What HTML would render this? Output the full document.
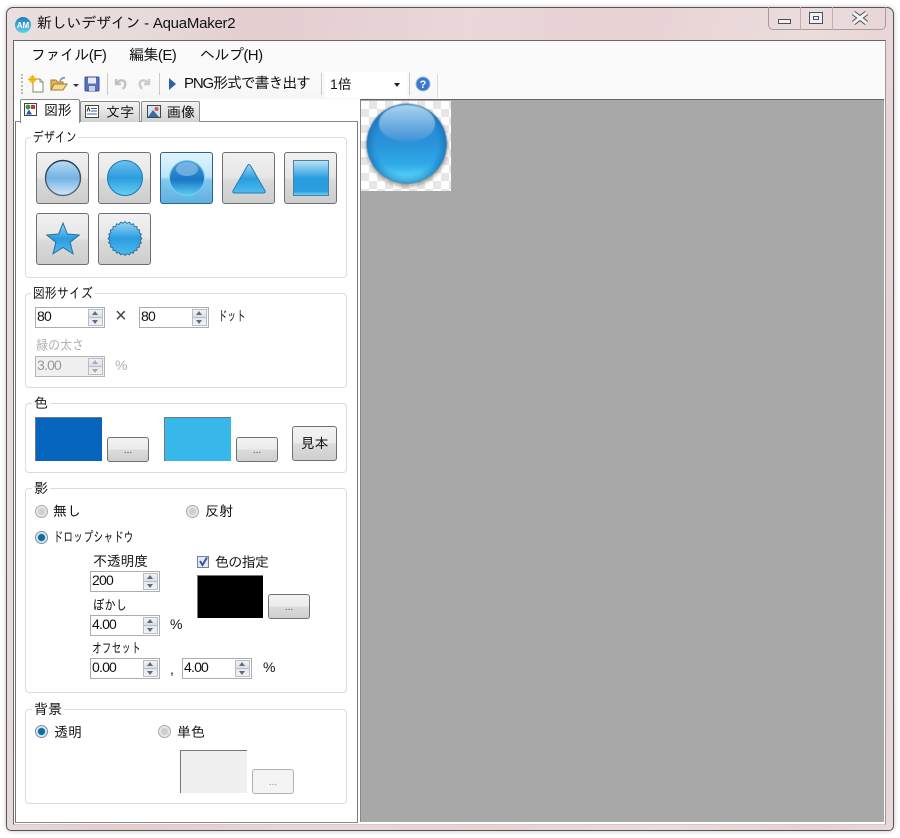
<!DOCTYPE html>
<html lang="ja">
<head>
<meta charset="utf-8">
<title>新しいデザイン - AquaMaker2</title>
<style>
html,body{margin:0;padding:0;background:#fff;}
body{width:900px;height:838px;position:relative;overflow:hidden;font-family:"Liberation Sans","IPAGothic","Noto Sans CJK JP",sans-serif;font-size:14px;color:#111;}
div,span,svg{position:absolute;box-sizing:border-box;}
.t{white-space:nowrap;line-height:16px;height:16px;}
.dis{color:#b0b0b0;}
.sx{transform-origin:0 50%;}
.win{left:6px;top:7px;width:888px;height:824px;border:1px solid #555;border-radius:7px 7px 5px 5px;box-shadow:0 0 5px rgba(0,0,0,.25);background:linear-gradient(100deg,#e9dfdf 0,#e7dcdc 12%,#e3ced0 24%,#e9d7d9 45%,#e7d2d4 60%,#ecdcdd 78%,#e6d1d3 92%,#e9d8d9 100%);}
.client{left:13px;top:40px;width:873px;height:785px;background:#fff;border:1px solid #666;border-right-color:#999;border-bottom-color:#d8c8ca;}
.menu{left:14px;top:41px;width:871px;height:58px;background:#fafafa;}
.tool{left:20px;top:70px;width:418px;height:29px;background:linear-gradient(#fbfbfb,#f6f6f6);}
.sep{width:1px;height:22px;top:73px;background:#c9c9c9;}
.canvas{left:360px;top:99px;width:524px;height:723px;background:#a8a8a8;border-top:1px solid #666;border-left:1px solid #888;}
.chk{left:361px;top:101px;width:90px;height:90px;background-color:#fff;background-image:conic-gradient(#e6e6e6 25%,#fff 0 50%,#e6e6e6 0 75%,#fff 0);background-size:16px 16px;}
.page{left:15px;top:121px;width:343px;height:702px;background:#fff;border:1px solid #8a8a8a;border-left-color:#777;border-right-color:#777;}
.tab{top:101px;height:21px;background:linear-gradient(#f2f2f2,#d2d2d2);border:1px solid #8a8a8a;border-bottom:0;border-radius:2px 2px 0 0;}
.tabon{left:20px;top:99px;width:60px;height:24px;background:#fff;border:1px solid #8a8a8a;border-bottom:0;border-radius:2px 2px 0 0;}
.g{left:25px;width:322px;border:1px solid #dcdcdc;border-radius:4px;background:#fff;}
.lg{height:14px;background:#fff;padding:0 2px;line-height:14px;white-space:nowrap;}
.b{width:53px;height:52px;border:1px solid #6f6f6f;border-radius:3px;background:linear-gradient(#f1f1f1 0,#e6e6e6 48%,#dadada 54%,#cdcdcd 100%);}
.on{border-color:#2c628b;background:linear-gradient(#e3f4fc 0,#bde4f8 48%,#7ec9ef 54%,#5fb0de 100%);}
.s{width:42px;height:25px;border:1px solid #707070;border-radius:3px;background:linear-gradient(#f3f3f3 0,#ebebeb 49%,#dcdcdc 50%,#cfcfcf 100%);font-size:10px;text-align:center;line-height:26px;color:#444;}
.sd{border-color:#adb2b5;background:#f4f4f4;color:#888;}
.sw{width:67px;height:44px;border:1px solid #777;border-right:0;border-bottom:0;}
.sp{width:70px;height:21px;border:1px solid #abadb3;background:#fff;}
.sp .v{left:1px;top:1px;line-height:15px;font-size:14px;letter-spacing:-.8px;white-space:nowrap;}
.sp .u{right:1px;top:1px;width:15px;height:9px;background:linear-gradient(#f2f2f2,#d8dee8);border:1px solid #b8bcc4;}
.sp .d{right:1px;top:9px;width:15px;height:9px;background:linear-gradient(#e4e8ee,#f2f2f2);border:1px solid #b8bcc4;}
.sp .u:after{content:"";position:absolute;left:3px;top:1px;border:3px solid transparent;border-top:0;border-bottom:4px solid #5f6b80;}
.sp .d:after{content:"";position:absolute;left:3px;top:2px;border:3px solid transparent;border-bottom:0;border-top:4px solid #5f6b80;}
.spd{background:#f0f0f0;border-color:#b5b5b5;}
.spd .v{color:#9a9a9a;}
.spd .u:after{border-bottom-color:#aaa;}
.spd .d:after{border-top-color:#aaa;}
.r{width:13px;height:13px;border-radius:50%;border:1px solid #a8a8a8;background:radial-gradient(circle at 50% 50%,#cfcfcf 0 3px,#e4e4e4 4px,#f6f6f6);}
.rc{background:radial-gradient(circle at 50% 50%,#0c6f9f 0 3.2px,#d8e4f0 4px,#f4f4f4);border-color:#7a8ca4;}
</style>
</head>
<body>
<div class="win"></div>

<svg style="left:14px;top:16px" width="18" height="18" viewBox="0 0 18 18"><defs><linearGradient id="am" x1="0" y1="0" x2="0" y2="1"><stop offset="0" stop-color="#1f7fb8"/><stop offset="1" stop-color="#5fd0ee"/></linearGradient></defs><circle cx="9" cy="9" r="8" fill="url(#am)"/><text x="9" y="12" text-anchor="middle" font-size="8" font-family="Liberation Sans" font-weight="bold" fill="#fff">AM</text></svg>
<div class="t" style="left:37px;top:16px;font-size:15px;letter-spacing:-.25px;color:#111">新しいデザイン - AquaMaker2</div>

<div style="left:768px;top:7px;width:118px;height:23px;border:1px solid #a89c9d;border-top:0;border-radius:0 0 5px 5px;"></div>
<div style="left:800px;top:7px;width:1px;height:23px;background:#bdb2b3"></div>
<div style="left:832px;top:7px;width:1px;height:23px;background:#bdb2b3"></div>
<div style="left:778px;top:19px;width:13px;height:5px;background:#f2f2f2;border:1px solid #4a4f5a"></div>
<div style="left:809px;top:12px;width:14px;height:12px;background:#eef0f2;border:1px solid #4a4f5a"></div>
<div style="left:813px;top:16px;width:6px;height:4px;border:1px solid #4a4f5a"></div>
<svg style="left:851px;top:11px" width="18" height="14" viewBox="0 0 18 14"><path d="M2.500 2 L15.500 12 M15.500 2 L2.500 12" stroke="#4a4f5a" stroke-width="5"/><path d="M2.500 2 L15.500 12 M15.500 2 L2.500 12" stroke="#f2f2f2" stroke-width="3"/></svg>

<div class="client"></div>
<div class="menu"></div>
<div class="t" style="left:31px;top:48px;font-size:15px;letter-spacing:-.55px">ファイル(F)</div>
<div class="t" style="left:129px;top:48px;font-size:15px;letter-spacing:-.55px">編集(E)</div>
<div class="t" style="left:200px;top:48px;font-size:15px;letter-spacing:-.55px">ヘルプ(H)</div>

<div class="tool"></div>
<div style="left:21px;top:74px;width:0;height:20px;border-left:2px dotted #bbb"></div>
<svg style="left:28px;top:75px" width="18" height="18" viewBox="0 0 18 18"><path d="M5 4 H12 L15 7 V17 H5 Z" fill="#fff" stroke="#8a8a70"/><path d="M12 4 V7 H15" fill="#e6e6d8" stroke="#8a8a70"/><circle cx="4.500" cy="4.500" r="3.600" fill="#f7c51e"/><path d="M4.500 0 V9 M0 4.500 H9" stroke="#f4a810"/></svg>
<svg style="left:50px;top:76px" width="18" height="16" viewBox="0 0 18 16"><path d="M1 4 H6 L7.500 6 H13 V14 H1 Z" fill="#e6b84e" stroke="#a07c30"/><path d="M1 14 L4 8 H17 L13 14 Z" fill="#f5d98a" stroke="#a07c30"/><path d="M10 5 Q12 1 15 2" fill="none" stroke="#5a8fc0" stroke-width="1.500"/></svg>
<div style="left:73px;top:84px;border:3px solid transparent;border-bottom:0;border-top:3px solid #333"></div>
<svg style="left:84px;top:76px" width="16" height="16" viewBox="0 0 16 16"><rect x="1" y="1" width="14" height="14" rx="1" fill="#5870c4" stroke="#3a4c96"/><rect x="4" y="1.500" width="8" height="6" fill="#e8eef8"/><rect x="5" y="10" width="6" height="5" fill="#c8d0e0"/></svg>
<div class="sep" style="left:107px"></div>
<svg style="left:113px;top:76px" width="16" height="16" viewBox="0 0 16 16"><path d="M3 3 V8 H8 M3.500 7.500 Q7 3 11 5 Q14 8 10 13" fill="none" stroke="#c2c2c2" stroke-width="2.400"/></svg>
<svg style="left:136px;top:76px" width="16" height="16" viewBox="0 0 16 16"><path d="M13 3 V8 H8 M12.500 7.500 Q9 3 5 5 Q2 8 6 13" fill="none" stroke="#cccccc" stroke-width="2.400"/></svg>
<div class="sep" style="left:159px"></div>
<div style="left:169px;top:78px;border:5px solid transparent;border-right:0;border-left:7px solid #2d62a8;border-top-width:6px;border-bottom-width:6px"></div>
<div class="t" style="left:184px;top:76px;font-size:15px;letter-spacing:-1.150px">PNG形式で書き出す</div>
<div class="sep" style="left:321px"></div>
<div style="left:325px;top:72px;width:82px;height:26px;background:#fff"></div>
<div class="t" style="left:330px;top:76px;font-size:14px">1倍</div>
<div style="left:394px;top:83px;border:3px solid transparent;border-bottom:0;border-top:4px solid #222"></div>
<div class="sep" style="left:409px"></div>
<svg style="left:415px;top:76px" width="16" height="16" viewBox="0 0 16 16"><circle cx="8" cy="8" r="7" fill="#3a78c8" stroke="#9dbce4"/><text x="8" y="12" text-anchor="middle" font-size="11" font-weight="bold" font-family="Liberation Sans" fill="#fff">?</text></svg>
<div style="left:437px;top:74px;width:1px;height:24px;background:#ddd"></div>

<div class="canvas"></div>
<div class="chk"></div>
<svg style="left:361px;top:101px" width="90" height="90" viewBox="0 0 90 90">
<defs>
<linearGradient id="ball" x1="0" y1="0" x2="0" y2="1"><stop offset="0" stop-color="#2a86cc"/><stop offset=".45" stop-color="#2a90d8"/><stop offset=".75" stop-color="#2fa8e8"/><stop offset=".93" stop-color="#58d4f8"/><stop offset="1" stop-color="#6adcfa"/></linearGradient>
<radialGradient id="edge" cx=".5" cy=".5" r=".5"><stop offset=".78" stop-color="#1469b0" stop-opacity="0"/><stop offset=".97" stop-color="#1469b0" stop-opacity=".5"/><stop offset="1" stop-color="#0f5f9f" stop-opacity=".85"/></radialGradient>
<linearGradient id="hl" x1="0" y1="0" x2="0" y2="1"><stop offset="0" stop-color="#a8d2ee"/><stop offset=".55" stop-color="#6dadE0"/><stop offset="1" stop-color="#3b93d6"/></linearGradient>
<filter id="bl" x="-20%" y="-20%" width="140%" height="140%"><feGaussianBlur stdDeviation="1.500"/></filter>
<filter id="sf" x="-10%" y="-10%" width="120%" height="120%"><feGaussianBlur stdDeviation=".5"/></filter>
</defs>
<circle cx="46" cy="45" r="41" fill="#6a5a48" opacity=".45" filter="url(#bl)"/>
<g filter="url(#sf)">
<circle cx="45.700" cy="42.800" r="40" fill="url(#ball)"/>
<circle cx="45.700" cy="42.800" r="40" fill="url(#edge)"/>
<ellipse cx="46" cy="22.500" rx="28" ry="18.500" fill="url(#hl)"/>
</g>
</svg>

<div class="page"></div>
<div class="tab" style="left:80px;width:60px"></div>
<div class="tab" style="left:141px;width:59px"></div>
<div class="tabon"></div>
<svg style="left:24px;top:103px" width="13" height="13" viewBox="0 0 13 13"><rect x=".5" y=".5" width="12" height="12" fill="#fff" stroke="#444"/><circle cx="4" cy="4" r="2.400" fill="#2c9a3c"/><rect x="7" y="2" width="4" height="4" fill="#d8332a"/><path d="M2 11.500 L5 6.500 L8 11.500 Z" fill="#2f4fb8"/></svg>
<div class="t" style="left:44px;top:102px;font-size:14px;letter-spacing:-.2px">図形</div>
<svg style="left:85px;top:105px" width="14" height="13" viewBox="0 0 14 13"><rect x=".5" y=".5" width="13" height="12" fill="#fff" stroke="#444"/><path d="M6 3.500 H12 M6 6 H12 M2 9 H12" stroke="#3a5fa8"/><path d="M2 6.500 L3.500 2.500 L5 6.500" stroke="#333" fill="none"/></svg>
<div class="t" style="left:106px;top:104px;font-size:14px">文字</div>
<svg style="left:147px;top:105px" width="14" height="13" viewBox="0 0 14 13"><rect x=".5" y=".5" width="13" height="12" fill="#cfe6f6" stroke="#444"/><circle cx="9.500" cy="4" r="2" fill="#e8552a"/><path d="M1 12 L6 5 L12 12 Z" fill="#3c6f9f"/></svg>
<div class="t" style="left:167px;top:104px;font-size:14px">画像</div>

<!-- デザイン -->
<div class="g" style="top:137px;height:141px"></div>
<div class="lg sx" style="left:31px;top:130px;transform:scaleX(.79)">デザイン</div>
<div class="b" style="left:36px;top:152px"></div>
<div class="b" style="left:98px;top:152px"></div>
<div class="b on" style="left:160px;top:152px"></div>
<div class="b" style="left:222px;top:152px"></div>
<div class="b" style="left:284px;top:152px"></div>
<div class="b" style="left:36px;top:213px"></div>
<div class="b" style="left:98px;top:213px"></div>
<svg style="left:36px;top:152px" width="302" height="114" viewBox="0 0 302 114">
<defs>
<linearGradient id="a" x1="0" y1="0" x2="0" y2="1"><stop offset="0" stop-color="#bcdcf2"/><stop offset=".5" stop-color="#74b2e4"/><stop offset="1" stop-color="#d4e8f6"/></linearGradient>
<linearGradient id="as" x1="0" y1="0" x2="0" y2="1"><stop offset="0" stop-color="#22384e"/><stop offset="1" stop-color="#5a6c7c"/></linearGradient>
<linearGradient id="c" x1="0" y1="0" x2="0" y2="1"><stop offset="0" stop-color="#6fc0ec"/><stop offset=".5" stop-color="#2a9ddf"/><stop offset="1" stop-color="#68d0f4"/></linearGradient>
<linearGradient id="e" x1="0" y1="0" x2="0" y2="1"><stop offset="0" stop-color="#4a9ad6"/><stop offset=".55" stop-color="#1a78c6"/><stop offset="1" stop-color="#5ccdf3"/></linearGradient>
<linearGradient id="q" x1="0" y1="0" x2="0" y2="1"><stop offset="0" stop-color="#bce4f8"/><stop offset=".5" stop-color="#2a9ddf"/><stop offset=".88" stop-color="#2a9ddf"/><stop offset="1" stop-color="#7ad8f5"/></linearGradient>
<linearGradient id="st" x1="0" y1="0" x2="0" y2="1"><stop offset="0" stop-color="#9ad6f4"/><stop offset=".5" stop-color="#2a9ddf"/><stop offset="1" stop-color="#4cbcee"/></linearGradient>
</defs>
<circle cx="27" cy="26" r="17.500" fill="url(#a)" stroke="url(#as)" stroke-width="1.400"/>
<circle cx="89" cy="26" r="17.500" fill="url(#c)" stroke="#1a78b4" stroke-width="1"/>
<circle cx="151" cy="26" r="17.500" fill="url(#e)" stroke="#6fd0f2" stroke-width="1"/>
<ellipse cx="151" cy="17" rx="11" ry="7" fill="#9fcdec" opacity=".55"/>
<path d="M210.700 15 Q213 10 215.300 15 L228 37 Q231 41 227 41 H199 Q195 41 198 37 Z" fill="url(#st)" stroke="#1f7fb4"/>
<rect x="257.500" y="8.500" width="35" height="35" fill="url(#q)" stroke="#4f7f9c"/>
<path d="M27 71 L31.400 82 L43.200 83 L34.100 90.300 L37 101.800 L27 95.500 L17 101.800 L19.900 90.300 L10.800 83 L22.600 82 Z" fill="url(#st)" stroke="#256f9f"/>
<polygon transform="translate(89,86.500)" fill="url(#st)" stroke="#1e5f8f" stroke-width=".8" points="17,0 15.200,2 16.400,4.400 14.100,5.900 14.700,8.500 12.100,9.300 12,12 9.300,12.100 8.500,14.700 5.900,14.100 4.400,16.400 2,15.200 0,17 -2,15.200 -4.400,16.400 -5.900,14.100 -8.500,14.700 -9.300,12.100 -12,12 -12.100,9.300 -14.700,8.500 -14.100,5.900 -16.400,4.400 -15.200,2 -17,0 -15.200,-2 -16.400,-4.400 -14.100,-5.900 -14.700,-8.500 -12.100,-9.300 -12,-12 -9.300,-12.100 -8.500,-14.700 -5.900,-14.100 -4.400,-16.400 -2,-15.200 0,-17 2,-15.200 4.400,-16.400 5.900,-14.100 8.500,-14.700 9.300,-12.100 12,-12 12.100,-9.300 14.700,-8.500 14.100,-5.900 16.400,-4.400 15.200,-2"/>
</svg>

<!-- 図形サイズ -->
<div class="g" style="top:293px;height:95px"></div>
<div class="lg sx" style="left:31px;top:286px;transform:scaleX(.86)">図形サイズ</div>
<div class="sp" style="left:35px;top:307px"><span class="v">80</span><span class="u"></span><span class="d"></span></div>
<div class="t" style="left:115px;top:308px;font-size:20px;color:#444">×</div>
<div class="sp" style="left:139px;top:307px"><span class="v">80</span><span class="u"></span><span class="d"></span></div>
<div class="t sx" style="left:218px;top:308px;transform:scaleX(.66)">ドット</div>
<div class="t dis sx" style="left:36px;top:337px;transform:scaleX(.86)">緑の太さ</div>
<div class="sp spd" style="left:35px;top:356px"><span class="v">3.00</span><span class="u"></span><span class="d"></span></div>
<div class="t dis" style="left:115px;top:357px">%</div>

<!-- 色 -->
<div class="g" style="top:403px;height:70px"></div>
<div class="lg" style="left:32px;top:396px">色</div>
<div class="sw" style="left:35px;top:417px;background:#0565bd"></div>
<div class="s" style="left:107px;top:437px">...</div>
<div class="sw" style="left:164px;top:417px;background:#37b7ea"></div>
<div class="s" style="left:236px;top:437px">...</div>
<div class="s" style="left:292px;top:426px;width:45px;height:35px;font-size:14px;line-height:33px;color:#111">見本</div>

<!-- 影 -->
<div class="g" style="top:488px;height:205px"></div>
<div class="lg" style="left:32px;top:481px">影</div>
<div class="r" style="left:35px;top:505px"></div>
<div class="t" style="left:53px;top:503px">無し</div>
<div class="r" style="left:186px;top:505px"></div>
<div class="t" style="left:205px;top:503px">反射</div>
<div class="r rc" style="left:35px;top:531px"></div>
<div class="t sx" style="left:53px;top:529px;transform:scaleX(.72)">ドロップシャドウ</div>
<div class="t" style="left:93px;top:553px;letter-spacing:-.3px">不透明度</div>
<div class="sp" style="left:90px;top:571px"><span class="v">200</span><span class="u"></span><span class="d"></span></div>
<div style="left:197px;top:556px;width:12px;height:12px;border:1px solid #7f7f8a;background:#dfe8f4"></div>
<svg style="left:197px;top:555px" width="13" height="13" viewBox="0 0 13 13"><path d="M3 6 L5.500 10 L10 2.500" fill="none" stroke="#3a55a8" stroke-width="2"/></svg>
<div class="t" style="left:215px;top:554px;letter-spacing:-.7px">色の指定</div>
<div style="left:197px;top:575px;width:66px;height:43px;background:#000;border:1px solid #777;border-right:0;border-bottom:0"></div>
<div class="s" style="left:268px;top:594px">...</div>
<div class="t sx" style="left:93px;top:597px;transform:scaleX(.81)">ぼかし</div>
<div class="sp" style="left:90px;top:615px"><span class="v">4.00</span><span class="u"></span><span class="d"></span></div>
<div class="t" style="left:170px;top:616px">%</div>
<div class="t sx" style="left:92px;top:640px;transform:scaleX(.7)">オフセット</div>
<div class="sp" style="left:90px;top:658px"><span class="v">0.00</span><span class="u"></span><span class="d"></span></div>
<div class="t" style="left:170px;top:661px">,</div>
<div class="sp" style="left:182px;top:658px"><span class="v">4.00</span><span class="u"></span><span class="d"></span></div>
<div class="t" style="left:263px;top:659px">%</div>

<!-- 背景 -->
<div class="g" style="top:709px;height:95px"></div>
<div class="lg" style="left:32px;top:702px">背景</div>
<div class="r rc" style="left:35px;top:725px"></div>
<div class="t" style="left:54px;top:724px">透明</div>
<div class="r" style="left:158px;top:725px"></div>
<div class="t" style="left:177px;top:724px">単色</div>
<div class="sw" style="left:180px;top:750px;background:#f0f0f0;height:43px"></div>
<div class="s sd" style="left:252px;top:769px">...</div>
</body>
</html>
